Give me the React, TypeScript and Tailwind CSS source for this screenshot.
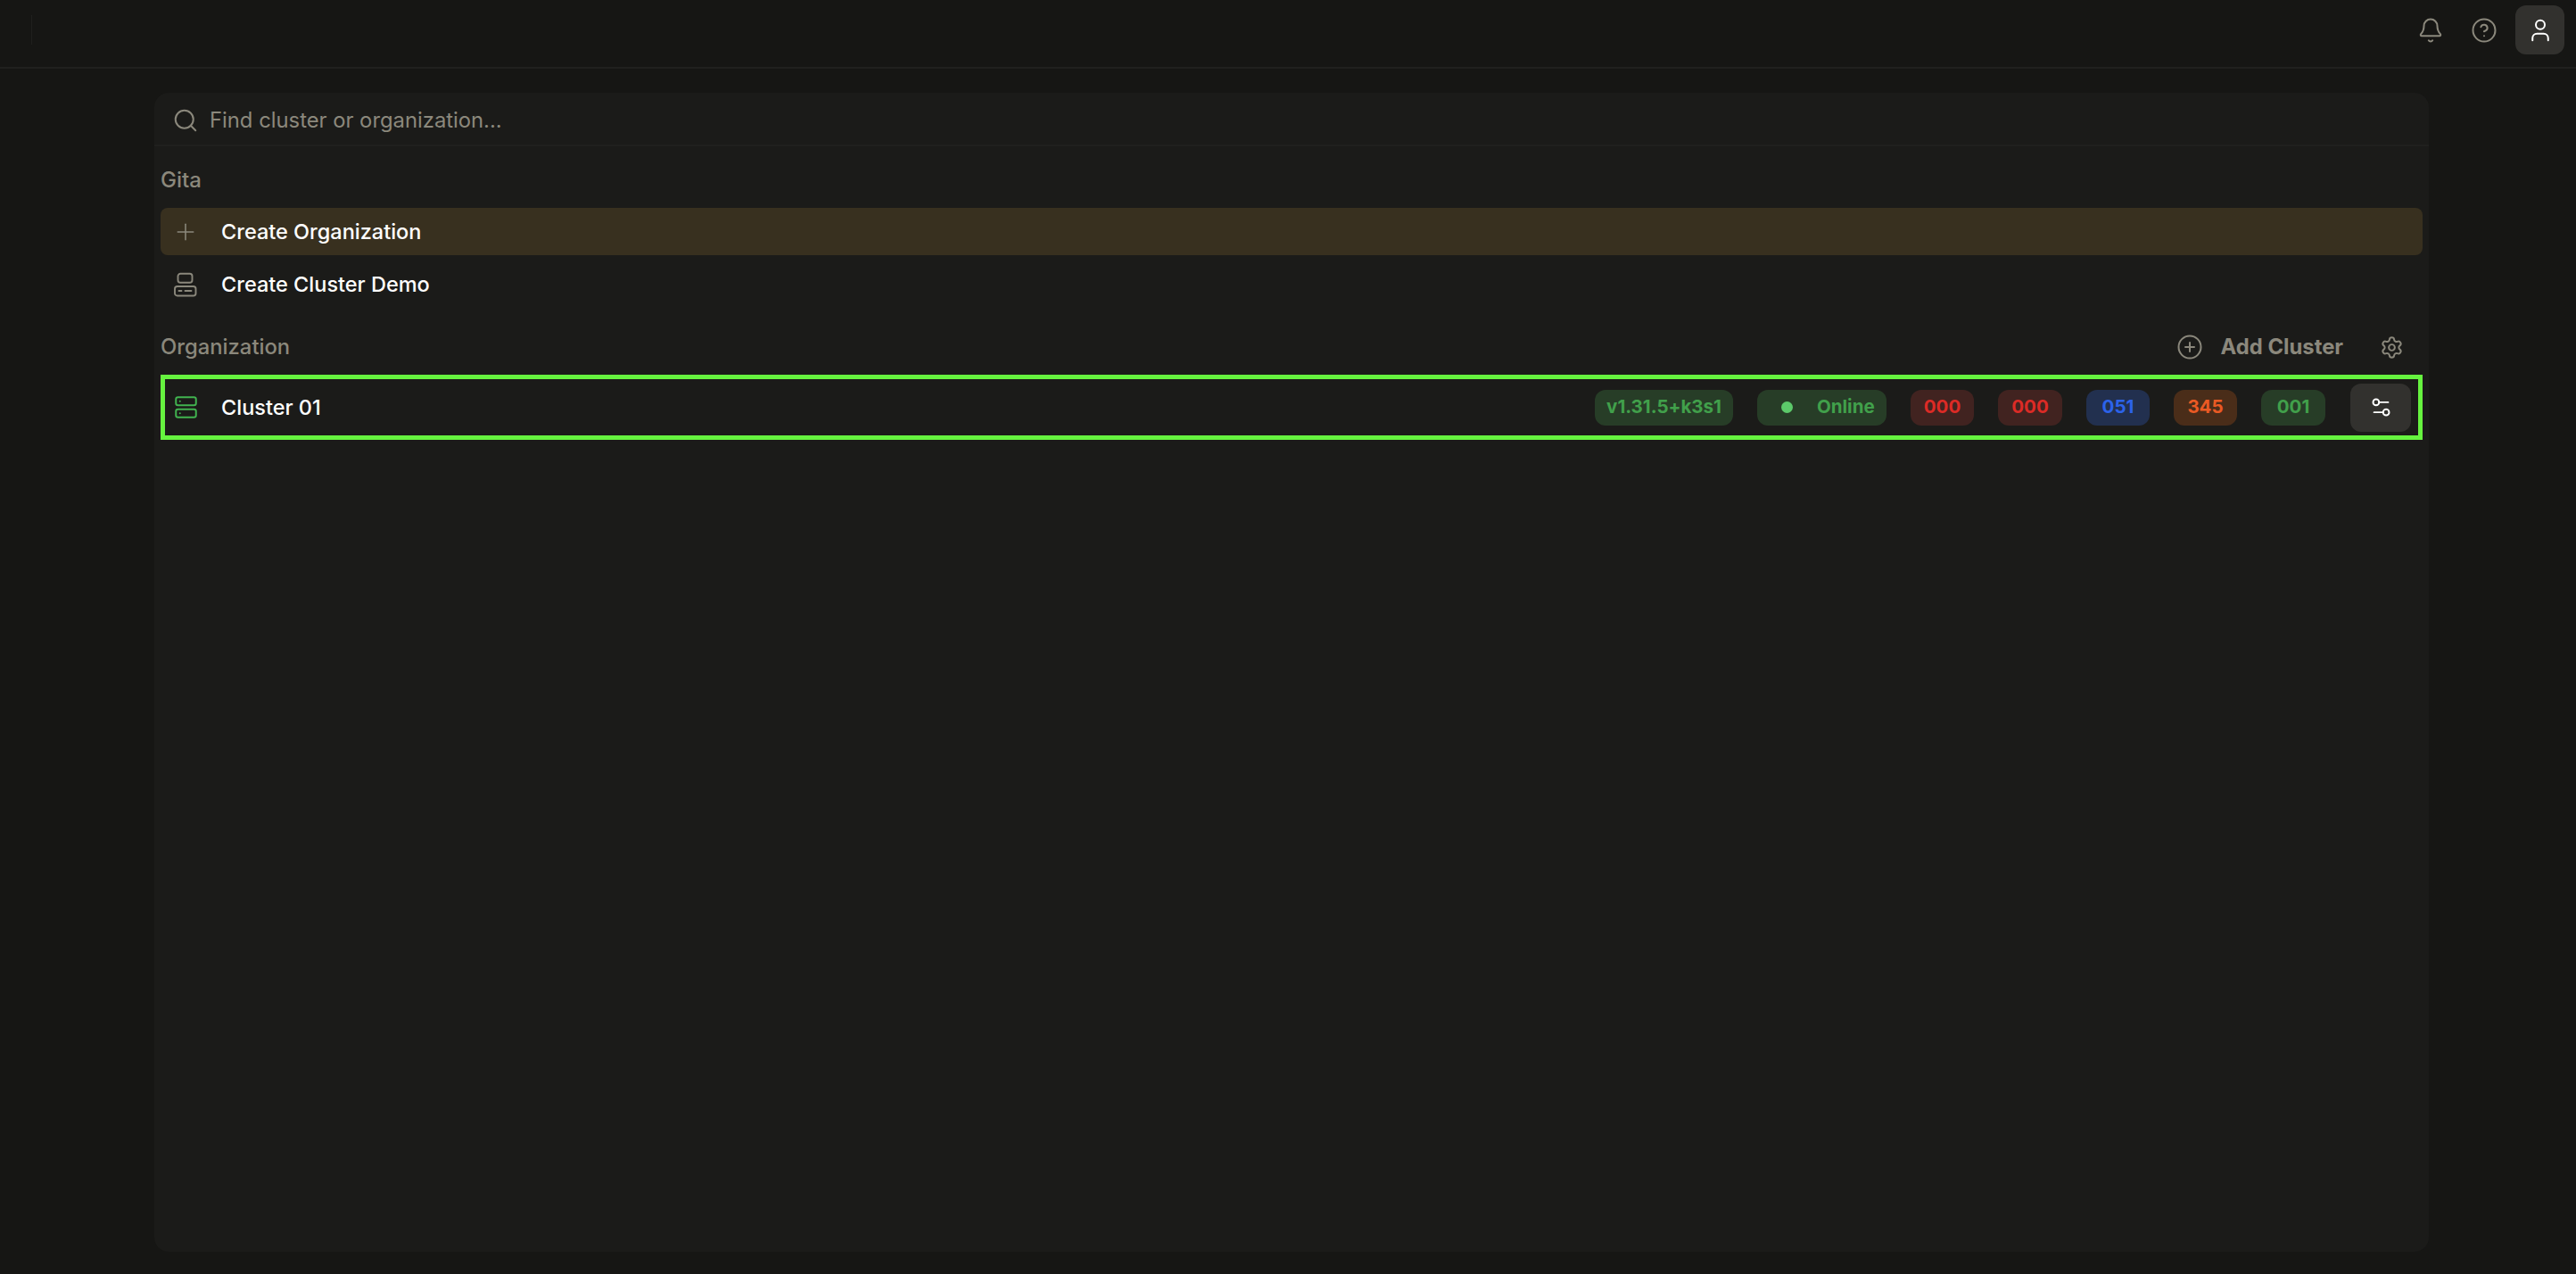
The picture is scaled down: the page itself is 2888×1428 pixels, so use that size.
import React from 'react';
import { Bell, CircleHelp, CirclePlus, Plus, Search, Server, Settings, Settings2, User } from 'lucide-react';

const font = { fontFamily: 'Inter, sans-serif' };

const DemoClusterIcon = () => (
  <svg width="30" height="30" viewBox="0 0 30 30" fill="none" stroke="currentColor" strokeWidth="1.9" strokeLinecap="round">
    <rect x="6.5" y="2.8" width="16" height="10" rx="2.8" />
    <rect x="3" y="17" width="23.5" height="10.5" rx="2.8" />
    <path d="M7.5 22h3M14.5 22h7" />
  </svg>
);

const badges = [
  { label: '000', cls: 'w-[71px] bg-[#412320] text-[#dc2b26]' },
  { label: '000', cls: 'w-[72px] bg-[#412320] text-[#dc2b26]' },
  { label: '051', cls: 'w-[71px] bg-[#22304f] text-[#2c63ea]' },
  { label: '345', cls: 'w-[71px] bg-[#4a2d19] text-[#ea5a24]' },
  { label: '001', cls: 'w-[72px] bg-[#273d27] text-[#41a04b]' },
];

export default function App() {
  return (
    <div className="flex h-[1428px] flex-col overflow-hidden bg-[#161614]" style={font}>
      {/* Top bar */}
      <header className="flex h-[77px] shrink-0 items-center border-b-2 border-[#20201e] pb-[8px] pl-[35px] pr-[13px]">
        <div className="h-[33px] w-px bg-[#20201e]" />
        <div className="ml-auto flex items-center text-[#8b887c]">
          <Bell size={30} strokeWidth={1.6} />
          <CircleHelp size={30} strokeWidth={1.6} className="ml-[30px]" />
          <button className="ml-[20px] flex h-[55px] w-[55px] items-center justify-center rounded-[12px] bg-[#32312e] text-white">
            <User size={30} strokeWidth={1.6} />
          </button>
        </div>
      </header>

      <main className="flex-1 pb-[25px] pl-[173px] pr-[165px] pt-[27px]">
        <div className="flex h-full flex-col rounded-[16px] bg-[#1b1b19]">
          {/* Search */}
          <div className="flex h-[60px] shrink-0 items-center gap-[12px] border-b-2 border-[#20201e] px-[20px] pt-[3px] text-[#8b887c]">
            <Search size={30} strokeWidth={1.6} />
            <span className="text-[23.8px]">Find cluster or organization...</span>
          </div>

          <div className="px-[7px]">
            <div className="flex h-[69px] items-center pt-[7px] text-[24px] font-medium text-[#8b887c]">Gita</div>
            <div className="flex h-[53px] items-center rounded-[8px] bg-[#38301f] pl-[13px] text-white">
              <Plus size={30} strokeWidth={1.25} className="text-[#8b887c]" />
              <span className="ml-[25px] text-[23.5px] font-medium">Create Organization</span>
            </div>
            <div className="flex h-[66px] items-center pl-[13px] text-white">
              <span className="text-[#8b887c]"><DemoClusterIcon /></span>
              <span className="ml-[25px] text-[23.5px] font-medium">Create Cluster Demo</span>
            </div>

            <div className="flex h-[68px] items-center pt-[6px] text-[23.8px] font-medium text-[#8b887c]">
              <span>Organization</span>
              <div className="ml-auto flex items-center pr-[21px]">
                <CirclePlus size={30} strokeWidth={1.6} className="ml-[2px]" />
                <span className="ml-[20px] font-bold">Add Cluster</span>
                <Settings size={27} strokeWidth={1.75} className="ml-[41px]" />
              </div>
            </div>

            <div className="flex h-[73px] items-center border-[5px] border-[#66f33f] pl-[10px] pr-[8px] text-white">
              <Server size={27} strokeWidth={1.75} className="text-[#41b34f]" />
              <span className="ml-[26px] text-[23.5px] font-medium">Cluster 01</span>
              <div className="ml-auto flex items-center gap-[27px] text-[20.5px] font-bold">
                <span className="flex h-[40px] w-[155px] items-center justify-center rounded-[12px] bg-[#273d27] text-[#41a04b]">v1.31.5+k3s1</span>
                <span className="flex h-[40px] w-[145px] items-center rounded-[12px] bg-[#273d27] pl-[27px] text-[#41a04b]">
                  <span className="h-[13px] w-[13px] rounded-full bg-[#5cc96a]" />
                  <span className="ml-[27px]">Online</span>
                </span>
                {badges.map((badge, i) => (
                  <span key={i} className={`flex h-[40px] items-center justify-center rounded-[12px] ${badge.cls}`}>
                    {badge.label}
                  </span>
                ))}
                <button className="ml-[1px] flex h-[54px] w-[68px] items-center justify-center rounded-[12px] bg-[#32312e] text-white">
                  <Settings2 size={27} strokeWidth={1.75} />
                </button>
              </div>
            </div>
          </div>
        </div>
      </main>
    </div>
  );
}
